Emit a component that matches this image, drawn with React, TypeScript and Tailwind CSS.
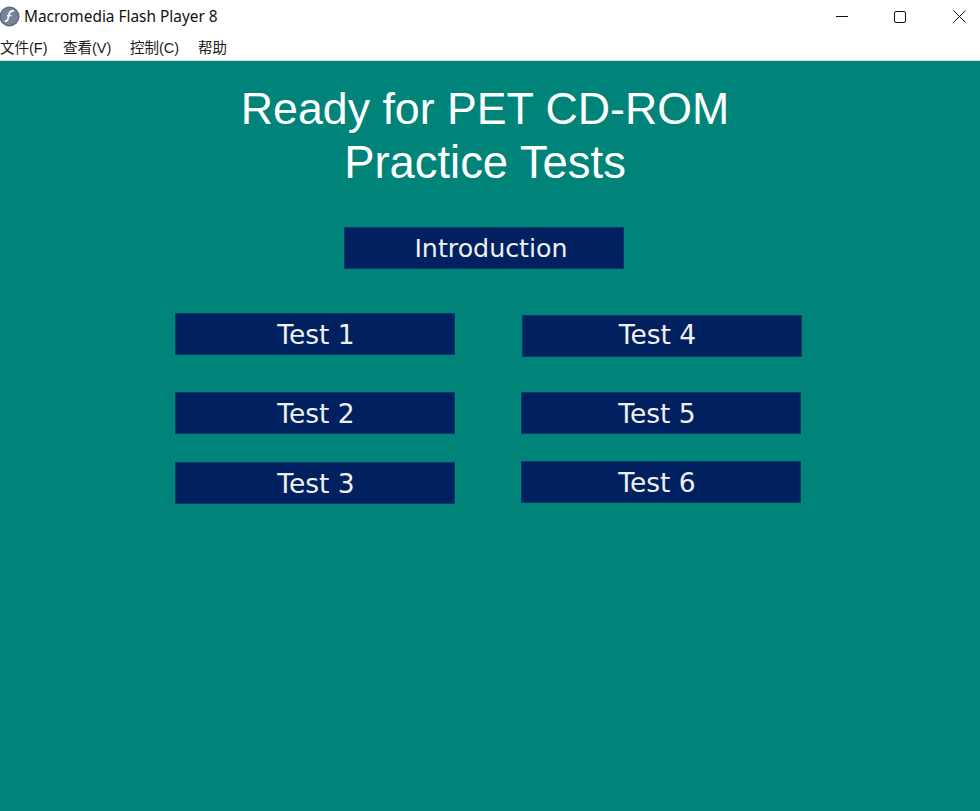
import React from 'react';

const MenuItem = ({ label, className }: { label: string; className: string }) => (
  <span className={`text-[14.5px] leading-[20px] text-[#1a1a1a] ${className}`}>{label}</span>
);

const TestButton = ({ label, className }: { label: string; className: string }) => (
  <button
    className={`flex h-[42px] w-[280px] items-center justify-center border border-[#063a6c] bg-[#00205f] font-['DejaVu_Sans',Verdana,sans-serif] leading-none text-[#f0f0f0] ${className}`}
  >
    {label}
  </button>
);

const App: React.FC = () => {
  return (
    <div className="flex h-[811px] w-[980px] flex-col overflow-hidden bg-white font-['Liberation_Sans','Noto_Sans_CJK_SC',sans-serif]">
      {/* Title bar */}
      <div className="flex h-[33px] items-center">
        <svg className="ml-[-1px] h-[21px] w-[21px]" viewBox="0 0 21 21">
          <circle cx="10.5" cy="10.5" r="10" fill="#5f6b80" />
          <circle cx="10.5" cy="10.5" r="8.5" fill="#76839b" />
          <path d="M15 5c-3-.5-4.4.8-5 3.6l-1 4.2c-.5 2-1.600 2.700-3.400 2.200" fill="none" stroke="#fff" strokeWidth="1.7" />
          <path d="M8 9.600h4.600" fill="none" stroke="#fff" strokeWidth="1.400" />
        </svg>
        <span className="ml-[4px] font-['Noto_Sans',sans-serif] text-[15.4px] leading-none text-[#111]">
          Macromedia Flash Player 8
        </span>
        <div className="ml-auto flex items-center">
          <svg className="mr-[46px] h-[12px] w-[12px]" viewBox="0 0 12 12">
            <path d="M0 5.500h12" stroke="#111" strokeWidth="1" />
          </svg>
          <svg className="mr-[47px] h-[12px] w-[12px]" viewBox="0 0 12 12">
            <rect x="0.5" y="0.5" width="11" height="11" rx="1.5" fill="none" stroke="#111" strokeWidth="1" />
          </svg>
          <svg className="mr-[14px] h-[13px] w-[13px]" viewBox="0 0 13 13">
            <path d="M0.5 0.5l12 12M12.5 0.5l-12 12" stroke="#111" strokeWidth="1" />
          </svg>
        </div>
      </div>

      {/* Menu bar */}
      <div className="flex h-[28px] items-center border-b border-[#d9d9d9] pt-[3px]">
        <MenuItem label="文件(F)" className="w-[63px]" />
        <MenuItem label="查看(V)" className="w-[67px]" />
        <MenuItem label="控制(C)" className="w-[68px]" />
        <MenuItem label="帮助" className="" />
      </div>

      {/* Stage */}
      <main className="flex flex-1 flex-col bg-[#00847a]">
        <h1 className="mt-[21px] w-[970px] text-center text-[44.7px] font-normal leading-[54px] text-white">
          Ready for PET CD-ROM
          <br />
          <span className="text-[45.4px]">Practice Tests</span>
        </h1>
        <TestButton label="Introduction" className="ml-[344px] mt-[37px] pl-[14px] pt-[2px] text-[25.3px]" />
        <div className="mt-[44px] flex">
          <div className="ml-[175px] flex flex-col">
            <TestButton label="Test 1" className="pl-[2px] pt-[2px] text-[26.5px]" />
            <TestButton label="Test 2" className="mt-[37px] pl-[2px] pt-[2px] text-[26.5px]" />
            <TestButton label="Test 3" className="mt-[28px] pl-[2px] pt-[2px] text-[26.5px]" />
          </div>
          <div className="ml-[66px] flex flex-col">
            <TestButton label="Test 4" className="ml-[1px] mt-[2px] pb-[2px] pr-[9px] text-[26.5px]" />
            <TestButton label="Test 5" className="mt-[35px] pr-[8px] pt-[2px] text-[26.5px]" />
            <TestButton label="Test 6" className="mt-[27px] pr-[8px] pt-[2px] text-[26.5px]" />
          </div>
        </div>
      </main>
    </div>
  );
};

export default App;
